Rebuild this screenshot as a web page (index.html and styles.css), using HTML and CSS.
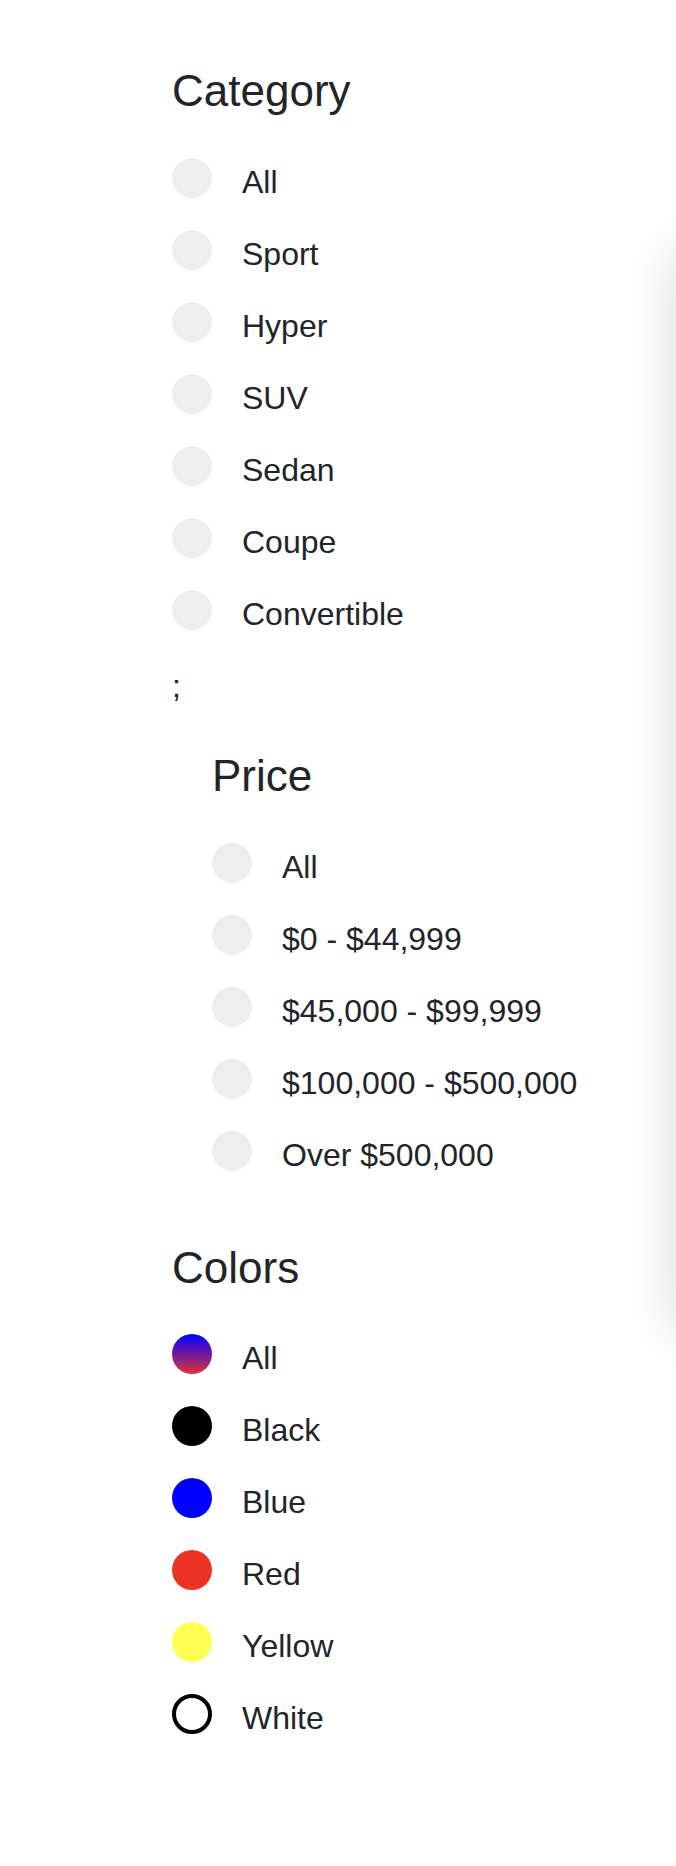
FILE: index.html
```html
<!DOCTYPE html>
<html lang="en">
<head>
<meta charset="utf-8">
<title>Filters</title>
<link rel="stylesheet" href="styles.css">
</head>
<body>
<div class="page">
  <div class="filters">
    <section class="filter">
      <h3 class="filter-title">Category</h3>
      <ul class="options">
        <li class="option"><span class="dot dot-empty"></span><span class="label">All</span></li>
        <li class="option"><span class="dot dot-empty"></span><span class="label">Sport</span></li>
        <li class="option"><span class="dot dot-empty"></span><span class="label">Hyper</span></li>
        <li class="option"><span class="dot dot-empty"></span><span class="label">SUV</span></li>
        <li class="option"><span class="dot dot-empty"></span><span class="label">Sedan</span></li>
        <li class="option"><span class="dot dot-empty"></span><span class="label">Coupe</span></li>
        <li class="option"><span class="dot dot-empty"></span><span class="label">Convertible</span></li>
      </ul>
    </section>
    <p class="stray">;</p>
    <section class="filter filter-nested">
      <h3 class="filter-title">Price</h3>
      <ul class="options">
        <li class="option"><span class="dot dot-empty"></span><span class="label">All</span></li>
        <li class="option"><span class="dot dot-empty"></span><span class="label">$0 - $44,999</span></li>
        <li class="option"><span class="dot dot-empty"></span><span class="label">$45,000 - $99,999</span></li>
        <li class="option"><span class="dot dot-empty"></span><span class="label">$100,000 - $500,000</span></li>
        <li class="option"><span class="dot dot-empty"></span><span class="label">Over $500,000</span></li>
      </ul>
    </section>
    <section class="filter filter-colors">
      <h3 class="filter-title">Colors</h3>
      <ul class="options">
        <li class="option"><span class="dot dot-all"></span><span class="label">All</span></li>
        <li class="option"><span class="dot dot-black"></span><span class="label">Black</span></li>
        <li class="option"><span class="dot dot-blue"></span><span class="label">Blue</span></li>
        <li class="option"><span class="dot dot-red"></span><span class="label">Red</span></li>
        <li class="option"><span class="dot dot-yellow"></span><span class="label">Yellow</span></li>
        <li class="option"><span class="dot dot-white"></span><span class="label">White</span></li>
      </ul>
    </section>
  </div>
  <div class="drawer"></div>
</div>
</body>
</html>
```

FILE: styles.css
```css
html, body {
  margin: 0;
  padding: 0;
  background: #ffffff;
}

body {
  font-family: "Liberation Sans", Arial, Helvetica, sans-serif;
  color: #212529;
}

.page {
  position: relative;
  overflow: hidden;
  min-height: 1866px;
}

.filters {
  padding: 65px 0 0 172px;
}

.filter-title {
  margin: 0 0 40px;
  font-size: 44px;
  font-weight: 400;
  line-height: 52.8px;
}

.options {
  list-style: none;
  margin: 0;
  padding: 0;
}

.option {
  display: flex;
  align-items: flex-start;
  gap: 30px;
  margin-bottom: 24px;
}

.dot {
  flex: 0 0 40px;
  width: 40px;
  height: 40px;
  border-radius: 50%;
  box-sizing: border-box;
}

.dot-empty { background: #eeeeee; }
.dot-all { background: linear-gradient(180deg, #0000ff 0%, #e0323c 100%); }
.dot-black { background: #000000; }
.dot-blue { background: #0000ff; }
.dot-red { background: #ec3424; }
.dot-yellow { background: #ffff55; }
.dot-white { background: #ffffff; border: 4px solid #000000; }

.label {
  font-size: 32px;
  line-height: 48px;
}

.stray {
  margin: 0;
  font-size: 32px;
  line-height: 48px;
}

.filter-nested {
  margin: 40px 0 0 40px;
}

.filter-colors {
  margin-top: 63px;
}

.drawer {
  position: absolute;
  top: 250px;
  left: 676px;
  width: 320px;
  height: 1080px;
  background: #ffffff;
  box-shadow: 0 0 50px rgba(0, 0, 0, 0.15);
}
```
